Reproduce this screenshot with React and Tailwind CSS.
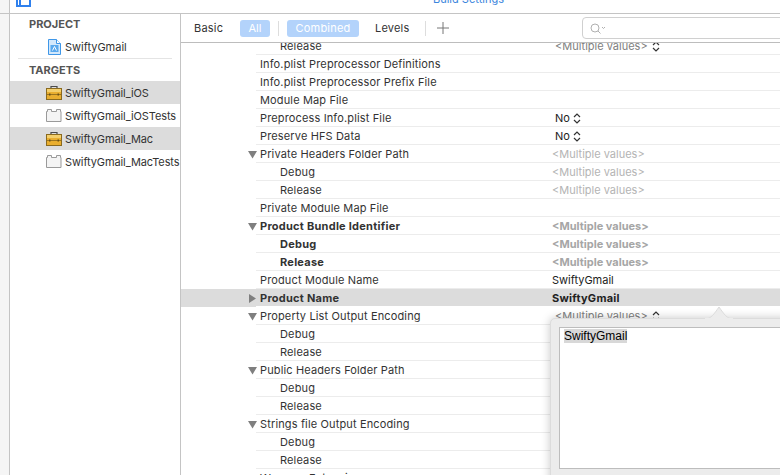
import React from "react";

const rows = [
  { name: "Release", child: true, value: "<Multiple values>", kind: "popup" },
  { name: "Info.plist Preprocessor Definitions" },
  { name: "Info.plist Preprocessor Prefix File" },
  { name: "Module Map File" },
  { name: "Preprocess Info.plist File", value: "No", kind: "select" },
  { name: "Preserve HFS Data", value: "No", kind: "select" },
  { name: "Private Headers Folder Path", open: true, value: "<Multiple values>", kind: "muted" },
  { name: "Debug", child: true, value: "<Multiple values>", kind: "muted" },
  { name: "Release", child: true, value: "<Multiple values>", kind: "muted" },
  { name: "Private Module Map File" },
  { name: "Product Bundle Identifier", open: true, bold: true, value: "<Multiple values>", kind: "muted" },
  { name: "Debug", child: true, bold: true, value: "<Multiple values>", kind: "muted" },
  { name: "Release", child: true, bold: true, value: "<Multiple values>", kind: "muted" },
  { name: "Product Module Name", value: "SwiftyGmail" },
  { name: "Product Name", closed: true, bold: true, selected: true, value: "SwiftyGmail" },
  { name: "Property List Output Encoding", open: true, value: "<Multiple values>", kind: "popup" },
  { name: "Debug", child: true },
  { name: "Release", child: true },
  { name: "Public Headers Folder Path", open: true },
  { name: "Debug", child: true },
  { name: "Release", child: true },
  { name: "Strings file Output Encoding", open: true },
  { name: "Debug", child: true },
  { name: "Release", child: true },
  { name: "Wrapper Extension" },
];

const Stepper = () => (
  <svg width="8" height="11" viewBox="0 0 8 11" className="ml-[4px]" fill="none" stroke="#333" strokeWidth="1.2">
    <path d="M1 4l3-3 3 3M1 7l3 3 3-3" />
  </svg>
);

const Triangle = ({ closed }) => (
  <svg width="9" height="9" viewBox="0 0 9 9" fill="#7f7f7f" className="relative left-[1px]">
    {closed ? <path d="M1 0l7 4.5L1 9z" /> : <path d="M0 1h9L4.5 8.5z" />}
  </svg>
);

const FileIcon = () => (
  <svg width="13" height="16" viewBox="0 0 13 16">
    <path d="M.5.5h8l4 4v11H.5z" fill="#d3e8fb" stroke="#3f97e8" />
    <path d="M8.5.5v4h4" fill="#fff" stroke="#3f97e8" />
    <rect x="2.5" y="6" width="8" height="7" fill="#5aa9ee" />
    <path d="M4.5 11.5l2-4 2 4" fill="none" stroke="#fff" />
  </svg>
);

const BriefcaseIcon = () => (
  <svg width="16" height="15" viewBox="0 0 16 15">
    <path d="M5 4V1.5h6V4" fill="none" stroke="#4a4a4a" strokeWidth="1.2" />
    <rect x=".5" y="3.5" width="15" height="11" fill="#e9ae2f" stroke="#8a6a1f" />
    <rect x="1" y="4" width="14" height="3" fill="#f4cf6b" />
    <path d="M1 9.5h14" stroke="#9a7420" />
    <rect x="3" y="8.5" width="1.5" height="2" fill="#6b5114" />
    <rect x="11.5" y="8.5" width="1.5" height="2" fill="#6b5114" />
  </svg>
);

const BundleIcon = () => (
  <svg width="16" height="13" viewBox="0 0 16 13">
    <path d="M.5 12.5V2.5h1V.5h4v2h5V.5h4v2h.5v10z" fill="#f4f4f4" stroke="#9a9a9a" />
  </svg>
);

const Target = ({ label, selected, icon }) => (
  <div className={`flex items-center h-[23px] pl-[36px] ${selected ? "bg-[#dcdcdc]" : ""}`}>
    <span className="w-[19px] flex items-center shrink-0">{icon}</span>
    <span className="whitespace-nowrap pt-[1px] tracking-[-0.1px]">{label}</span>
  </div>
);

const Value = ({ row }) => {
  if (!row.value) return null;
  if (row.kind === "popup") {
    return (
      <div className="flex items-center pl-[3px] text-[#808080]">
        {row.value}
        <Stepper />
      </div>
    );
  }
  if (row.kind === "select") {
    return (
      <div className="flex items-center pl-[3px] text-[#222]">
        {row.value}
        <svg width="8" height="11" viewBox="0 0 8 11" className="ml-[3px]" fill="none" stroke="#333" strokeWidth="1.2">
          <path d="M1 4l3-3 3 3M1 7l3 3 3-3" />
        </svg>
      </div>
    );
  }
  if (row.kind === "muted") {
    return <div className={row.bold ? "text-[#a6a6a6] font-bold" : "text-[#b4b4b4]"}>{row.value}</div>;
  }
  return <div className={row.bold ? "font-bold text-[#222] tracking-[0.25px]" : "text-[#222]"}>{row.value}</div>;
};

const SettingRow = ({ row }) => (
  <div className={`flex h-[18px] ${row.selected ? "bg-[#dcdcdc]" : ""}`}>
    <div className="w-[75px] shrink-0 flex items-center justify-end">
      {row.open && <Triangle />}
      {row.closed && <Triangle closed />}
    </div>
    <div className={`flex flex-1 items-center pt-[1px] border-b ${row.selected ? "border-white" : "border-[#ececec]"}`}>
      <div
        className={`w-[296px] shrink-0 whitespace-nowrap ${row.child ? "pl-[24px]" : "pl-[4px]"} ${
          row.bold ? "font-bold tracking-[0.25px]" : "tracking-[0.14px]"
        }`}
      >
        {row.name}
      </div>
      <Value row={row} />
    </div>
  </div>
);

export default function App() {
  return (
    <div
      className="w-[780px] h-[475px] overflow-hidden relative bg-white text-[11px] text-[#333]"
      style={{ fontFamily: "Inter, 'Liberation Sans', sans-serif" }}
    >
      <div className="h-[14px] border-b border-[#c4c4c4] overflow-hidden flex relative">
        <div className="w-[10px] h-full bg-[#f5f5f5] border-r border-[#c4c4c4] shrink-0" />
        <div className="ml-[6px] w-[15px] h-[7px] border-2 border-t-0 border-[#2f80ed] shrink-0 flex">
          <div className="w-[3px] border-r-2 border-[#2f80ed]" />
        </div>
        <div className="ml-[402px] -mt-[9px] text-[#3b86dd] whitespace-nowrap">Build Settings</div>
      </div>

      <div className="flex h-[461px]">
        <div className="w-[10px] bg-[#f5f5f5] border-r border-[#c4c4c4] shrink-0" />

        <div className="w-[171px] border-r border-[#c4c4c4] shrink-0">
          <div className="pl-[19px] pt-[2px] h-[22px] font-bold text-[#555] text-[11px]">PROJECT</div>
          <div className="flex items-center h-[22px] pl-[38px]">
            <span className="w-[17px] flex items-center shrink-0">
              <FileIcon />
            </span>
            SwiftyGmail
          </div>
          <div className="mx-[8px] w-[154px] border-b border-[#e4e4e4]" />
          <div className="pl-[19px] pt-[3px] h-[22px] font-bold text-[#555]">TARGETS</div>
          <Target label="SwiftyGmail_iOS" selected icon={<BriefcaseIcon />} />
          <Target label="SwiftyGmail_iOSTests" icon={<BundleIcon />} />
          <Target label="SwiftyGmail_Mac" selected icon={<BriefcaseIcon />} />
          <Target label="SwiftyGmail_MacTests" icon={<BundleIcon />} />
        </div>

        <div className="flex-1 min-w-0 flex flex-col overflow-hidden relative">
          <div className="h-[29px] shrink-0 border-b border-[#bdbdbd] flex items-center bg-white relative z-10 text-[#333]">
            <span className="ml-[13px] w-[46px] shrink-0 tracking-[0.2px]">Basic</span>
            <span className="w-[30px] h-[17px] shrink-0 rounded-[3px] bg-[#b3d3fb] text-white text-center leading-[17px]">All</span>
            <span className="ml-[8px] w-px h-[15px] shrink-0 bg-[#dddddd]" />
            <span className="ml-[8px] w-[72px] h-[17px] shrink-0 rounded-[3px] bg-[#b3d3fb] text-white text-center leading-[17px] tracking-[0.2px]">
              Combined
            </span>
            <span className="ml-[16px] w-[50px] shrink-0 tracking-[0.2px]">Levels</span>
            <span className="w-px h-[15px] shrink-0 bg-[#dddddd]" />
            <svg width="12" height="12" viewBox="0 0 12 12" className="ml-[11px] shrink-0" stroke="#777" strokeWidth="1">
              <path d="M6 0v12M0 6h12" />
            </svg>
            <div className="ml-[133px] w-[210px] h-[22px] border border-[#d0d0d0] rounded-[4px] shrink-0 flex items-center pl-[7px]">
              <svg width="16" height="11" viewBox="0 0 16 11" fill="none" stroke="#b0b0b0">
                <circle cx="5" cy="5" r="4" />
                <path d="M8 8l2.5 2.5M12 4l1.5 1.5L15 4" />
              </svg>
            </div>
          </div>
          <div className="-mt-[6px]">
            {rows.map((row, i) => (
              <SettingRow key={i} row={row} />
            ))}
          </div>
        </div>
      </div>

      {/* value editor popover */}
      <div className="absolute left-[550px] top-[318px] w-[240px] h-[170px] bg-[#ececec] rounded-[5px] border border-[#dcdcdc] shadow-[0_0_10px_rgba(0,0,0,0.22)] pl-[8px] pt-[8px]">
        <svg width="28" height="13" viewBox="0 0 28 13" className="absolute left-[154px] -top-[13px]">
          <path d="M0 13C6 13 9 8 14 1c5 7 8 12 14 12z" fill="#ececec" stroke="#dcdcdc" />
          <path d="M0 13h28" stroke="#ececec" strokeWidth="2" />
        </svg>
        <div className="h-[142px] bg-white border border-[#bdbdbd] pl-[4px]">
          <span
            className="inline-block bg-[#d8d8d8] text-black text-[12px] leading-[14px]"
            style={{ fontFamily: "'Liberation Sans', sans-serif" }}
          >
            SwiftyGmail
          </span>
        </div>
      </div>
    </div>
  );
}
